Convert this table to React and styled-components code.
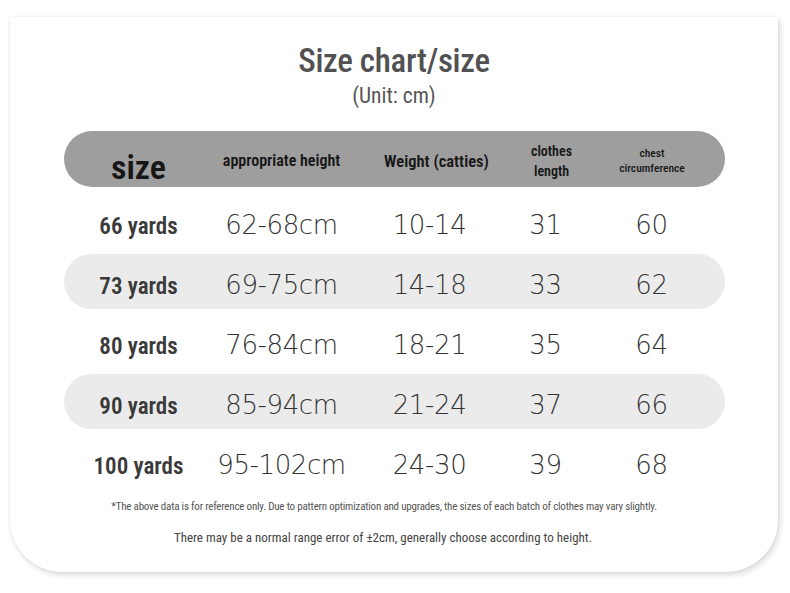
import styled, { createGlobalStyle } from "styled-components";

const GlobalStyle = createGlobalStyle`
  html, body {
    margin: 0;
    padding: 0;
    background: #ffffff;
  }
  body {
    font-family: "Roboto Condensed", "Roboto", sans-serif;
  }
`;

const rows = [
  { size: "66 yards", height: "62-68cm", weight: "10-14", length: "31", chest: "60" },
  { size: "73 yards", height: "69-75cm", weight: "14-18", length: "33", chest: "62" },
  { size: "80 yards", height: "76-84cm", weight: "18-21", length: "35", chest: "64" },
  { size: "90 yards", height: "85-94cm", weight: "21-24", length: "37", chest: "66" },
  { size: "100 yards", height: "95-102cm", weight: "24-30", length: "39", chest: "68" },
];

const App = () => {
  return (
    <Page>
      <GlobalStyle />
      <Card>
        <Title>Size chart/size</Title>
        <Unit>(Unit: cm)</Unit>

        <HeaderBar>
          <HeadCell size={34} drop={12}>size</HeadCell>
          <HeadCell size={16}>appropriate height</HeadCell>
          <HeadCell size={16.5}>Weight (catties)</HeadCell>
          <HeadCell size={14} leading={20}>
            clothes
            <br />
            length
          </HeadCell>
          <HeadCell size={11.5} leading={15} light>
            chest
            <br />
            circumference
          </HeadCell>
        </HeaderBar>

        <Body>
          {rows.map((r, i) => (
            <Row key={r.size} striped={i % 2 === 1}>
              <SizeCell>{r.size}</SizeCell>
              <NumCell>{r.height}</NumCell>
              <NumCell>{r.weight}</NumCell>
              <NumCell>{r.length}</NumCell>
              <NumCell>{r.chest}</NumCell>
            </Row>
          ))}
        </Body>

        <Footnote>
          *The above data is for reference only. Due to pattern optimization and
          upgrades, the sizes of each batch of clothes may vary slightly.
        </Footnote>
        <Note>
          There may be a normal range error of ±2cm, generally choose according
          to height.
        </Note>
      </Card>
    </Page>
  );
};

const Page = styled.div`
  width: 790px;
  height: 593px;
  padding: 17px 12px 0 10px;
  box-sizing: border-box;
  overflow: hidden;
`;

const Card = styled.div`
  display: flex;
  flex-direction: column;
  align-items: center;
  height: 555px;
  box-sizing: border-box;
  background: #ffffff;
  border-radius: 0 0 52px 52px;
  box-shadow: 2px 3px 6px rgba(0, 0, 0, 0.14), 0 0 3px rgba(0, 0, 0, 0.08);
  padding: 24px 52px 0 52px;
`;

const Title = styled.div`
  font-size: 33px;
  font-weight: 500;
  letter-spacing: -0.3px;
  color: #515151;
  line-height: 40px;
`;

const Unit = styled.div`
  font-size: 21.5px;
  color: #555555;
  margin-top: 3px;
  line-height: 24px;
`;

const HeaderBar = styled.div`
  display: grid;
  grid-template-columns: 150px 136px 174px 56px 145px;
  align-items: center;
  width: 661px;
  height: 56px;
  margin-top: 23px;
  background: #9e9e9e;
  border-radius: 28px;
`;

const HeadCell = styled.div`
  text-align: center;
  font-weight: ${(props) => (props.light ? 500 : 600)};
  color: #161616;
  font-size: ${(props) => props.size}px;
  line-height: ${(props) => props.leading || Math.round(props.size * 1.4)}px;
  padding-top: ${(props) => props.drop || 0}px;
`;

const Body = styled.div`
  display: flex;
  flex-direction: column;
  gap: 5px;
  margin-top: 7px;
`;

const Row = styled.div`
  display: grid;
  grid-template-columns: 150px 136px 160px 72px 140px;
  align-items: center;
  width: 661px;
  height: 55px;
  border-radius: 28px;
  background: ${(props) => (props.striped ? "#ebebeb" : "transparent")};
`;

const SizeCell = styled.div`
  text-align: center;
  font-size: 23px;
  font-weight: 600;
  color: #3a3a3a;
  padding-top: 10px;
`;

const NumCell = styled.div`
  text-align: center;
  font-family: "DejaVu Sans", sans-serif;
  font-weight: 200;
  font-size: 26px;
  letter-spacing: -0.4px;
  color: #333333;
  padding-top: 6px;
`;

const Footnote = styled.div`
  margin-top: 11px;
  margin-right: 20px;
  font-size: 11px;
  letter-spacing: -0.2px;
  color: #555555;
  text-align: center;
  white-space: nowrap;
`;

const Note = styled.div`
  margin-top: 17px;
  margin-right: 22px;
  font-size: 13px;
  color: #444444;
  text-align: center;
  white-space: nowrap;
`;

export default App;
